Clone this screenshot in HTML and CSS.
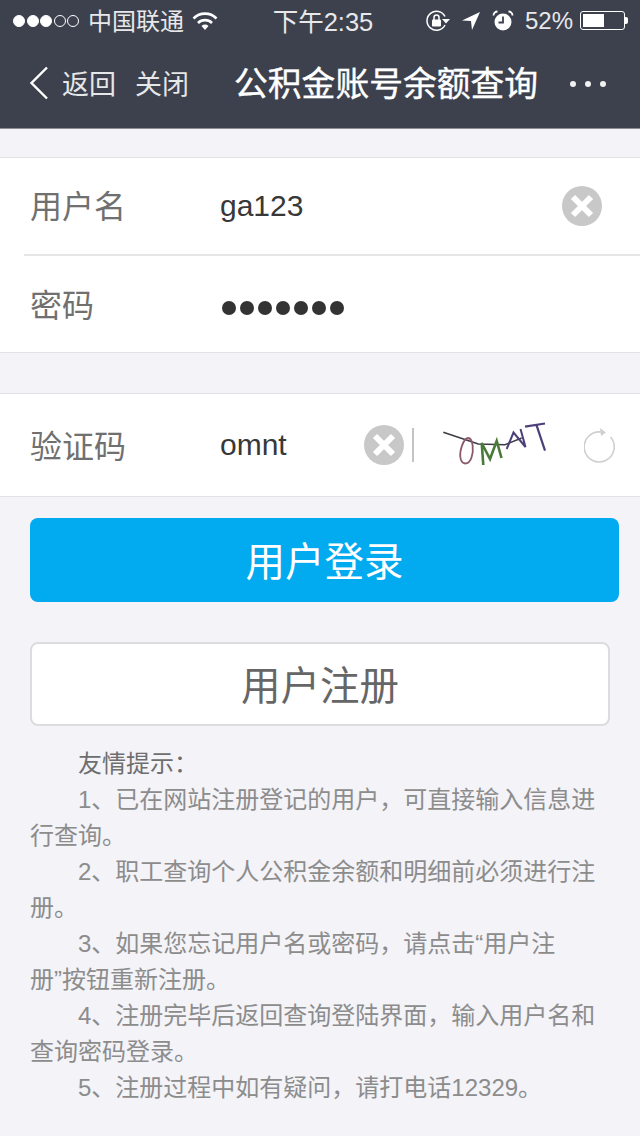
FILE: index.html
```html
<!DOCTYPE html>
<html lang="zh-CN">
<head>
    <meta charset="UTF-8">
    <meta name="viewport" content="width=device-width, initial-scale=1.0">
    <title>公积金账号余额查询</title>
    <link rel="stylesheet" href="styles.css">
</head>
<body>
    <header class="top">
        <div class="status">
            <div class="status-left">
                <span class="signal">
                    <i class="dot on"></i><i class="dot on"></i><i class="dot on"></i><i class="dot"></i><i class="dot"></i>
                </span>
                <span class="carrier">中国联通</span>
                <svg class="wifi" width="26" height="20" viewBox="0 0 26 20">
                    <path d="M1.5 7.5a16 16 0 0 1 23 0" fill="none" stroke="#fff" stroke-width="2.6"/>
                    <path d="M6 12a10 10 0 0 1 14 0" fill="none" stroke="#fff" stroke-width="2.6"/>
                    <path d="M9.5 15a5 5 0 0 1 7 0L13 19z" fill="#fff"/>
                </svg>
            </div>
            <span class="time">下午2:35</span>
            <div class="status-right">
                <svg width="26" height="22" viewBox="0 0 26 22">
                    <path d="M20 6.500A9.500 9.500 0 1 0 20 15" fill="none" stroke="#fff" stroke-width="1.500"/>
                    <path d="M17 9h8l-4 4.500z" fill="#fff"/>
                    <rect x="7" y="9.500" width="9" height="7" rx="1" fill="#fff"/>
                    <path d="M9 10V7.500a2.500 2.500 0 0 1 5 0V10" fill="none" stroke="#fff" stroke-width="1.500"/>
                </svg>
                <svg class="location" width="20" height="20" viewBox="0 0 20 20">
                    <path d="M19 1L1 9.500l9 .5 1 9z" fill="#fff"/>
                </svg>
                <svg width="22" height="22" viewBox="0 0 22 22">
                    <circle cx="11" cy="12" r="8.500" fill="#fff"/>
                    <path d="M11 6.500V12.500H6.500" fill="none" stroke="#3c414d" stroke-width="1.800"/>
                    <path d="M1.500 5.500a4 4 0 0 1 4-4M20.500 5.500a4 4 0 0 0-4-4" fill="none" stroke="#fff" stroke-width="1.800"/>
                </svg>
                <span class="percent">52%</span>
                <span class="battery"><span class="battery-fill"></span></span>
                <span class="battery-tip"></span>
            </div>
        </div>
        <nav class="nav">
            <svg class="back" width="20" height="34" viewBox="0 0 20 34">
                <path d="M18 1.500L2.500 17 18 32.500" fill="none" stroke="#fff" stroke-width="2.400"/>
            </svg>
            <span class="nav-link">返回</span>
            <span class="nav-link close">关闭</span>
            <h1 class="nav-title">公积金账号余额查询</h1>
            <span class="more"><i></i><i></i><i></i></span>
        </nav>
    </header>

    <section class="group first">
        <div class="row row-line">
            <label class="label">用户名</label>
            <span class="value">ga123</span>
            <span class="clear"><svg width="40" height="40" viewBox="0 0 40 40"><circle cx="20" cy="20" r="20" fill="#c8c8c8"/><path d="M11 11l18 18M29 11L11 29" stroke="#fff" stroke-width="6"/></svg></span>
        </div>
        <div class="row row-pass">
            <label class="label">密码</label>
            <span class="dots"><i></i><i></i><i></i><i></i><i></i><i></i><i></i></span>
        </div>
    </section>

    <section class="group second">
        <div class="row row-code">
            <label class="label">验证码</label>
            <span class="value code-value">omnt</span>
            <svg class="code-clear" width="40" height="40" viewBox="0 0 40 40"><circle cx="20" cy="20" r="20" fill="#c8c8c8"/><path d="M11 11l18 18M29 11L11 29" stroke="#fff" stroke-width="6"/></svg>
            <span class="divider"></span>
            <svg class="captcha" width="112" height="50" viewBox="0 0 112 50">
                <path d="M1.300 12.300L36.300 24 63 24.700 79.700 18" fill="none" stroke="#3f3a44" stroke-width="1.500"/>
                <path d="M26.500 18c-5.500 0-10 15-7.500 22 2 5 8 5 10.500-2.500 2.500-7.500 1.500-18.500-3-19.500z" fill="none" stroke="#8a5a6c" stroke-width="1.800"/>
                <path d="M41.300 45L39.700 23 48 39 54.700 21 59.500 38" fill="none" stroke="#4a7a3a" stroke-width="2.600"/>
                <path d="M64.700 29L71.500 12.500 83.500 27 78.500 9" fill="none" stroke="#4d3f78" stroke-width="2"/>
                <path d="M83 6.700L103 3.500M94.700 5.700L103 30.700" fill="none" stroke="#4d3f78" stroke-width="2.200"/>
            </svg>
            <svg class="refresh" width="34" height="38" viewBox="0 0 34 38">
                <path d="M17 6A15 15 0 1 0 26.500 11" fill="none" stroke="#cfcfcf" stroke-width="1.600"/>
                <path d="M16 2l6 4.500-5 3.500z" fill="#cfcfcf"/>
            </svg>
        </div>
    </section>

    <button class="btn btn-login">用户登录</button>
    <button class="btn btn-register">用户注册</button>

    <section class="tips">
        <p>友情提示：</p>
        <p>1、已在网站注册登记的用户，可直接输入信息进行查询。</p>
        <p>2、职工查询个人公积金余额和明细前必须进行注册。</p>
        <p>3、如果您忘记用户名或密码，请点击“用户注<br>册”按钮重新注册。</p>
        <p>4、注册完毕后返回查询登陆界面，输入用户名和查询密码登录。</p>
        <p>5、注册过程中如有疑问，请打电话12329。</p>
    </section>
</body>
</html>
```

FILE: styles.css
```css
* {
    box-sizing: border-box;
}
html, body {
    height: 1136px;
    overflow: hidden;
}
body {
    margin: 0;
    background-color: #f3f3f8;
    font-family: "Liberation Sans", "Noto Sans CJK SC", sans-serif;
    color: #333;
}
.top {
    height: 129px;
    background-color: #3c414d;
    border-bottom: 1px solid #8a8c92;
    color: #fff;
}
.status {
    height: 41px;
    padding: 0 12px 0 13px;
    display: flex;
    align-items: center;
    justify-content: space-between;
    font-size: 24px;
}
.status-left, .status-right {
    display: flex;
    align-items: center;
}
.status-left {
    width: 225px;
}
.status-right {
    width: 220px;
    justify-content: flex-end;
    gap: 9px;
}
.signal {
    display: flex;
    gap: 1.500px;
    margin-right: 9px;
}
.dot {
    width: 12px;
    height: 12px;
    border-radius: 50%;
    border: 1px solid #fff;
}
.dot.on {
    background-color: #fff;
}
.carrier {
    margin-right: 8px;
    padding-bottom: 3px;
    color: #e8e8ea;
}
.time {
    padding-bottom: 3px;
    font-size: 25.500px;
    color: #e8e8ea;
}
.location {
    margin: 0 2px 0 1px;
}
.percent {
    margin-left: 2px;
    font-size: 24px;
    color: #e8e8ea;
}
.battery {
    width: 45px;
    height: 19px;
    margin-left: -2px;
    padding: 2px;
    border: 1px solid #fff;
    border-radius: 3px;
}
.battery-fill {
    display: block;
    width: 21px;
    height: 100%;
    background-color: #fff;
}
.battery-tip {
    width: 3px;
    height: 7px;
    margin-left: -9px;
    background-color: #fff;
    border-radius: 0 2px 2px 0;
}
.nav {
    height: 87px;
    padding: 0 34px 4px 29px;
    display: flex;
    align-items: center;
}
.back {
    margin-right: 13px;
}
.nav-link {
    font-size: 27px;
    color: #e6e7e9;
}
.close {
    margin-left: 19px;
}
.nav-title {
    margin: 0 0 0 45px;
    padding-bottom: 2px;
    font-size: 33.800px;
    font-weight: normal;
    -webkit-text-stroke: 0.4px #fff;
    white-space: nowrap;
}
.more {
    margin-left: auto;
    margin-top: 2px;
    display: flex;
    gap: 9px;
}
.more i {
    width: 6px;
    height: 6px;
    border-radius: 50%;
    background-color: #f0f0f0;
}
.group {
    background-color: #fff;
    border-top: 1px solid #e2e2e4;
    border-bottom: 1px solid #e2e2e4;
}
.first {
    margin-top: 28px;
}
.second {
    margin-top: 40px;
}
.row {
    display: flex;
    align-items: center;
    padding-left: 30px;
}
.row-line {
    height: 98px;
    border-bottom: 2px solid #e6e6e8;
    margin-left: 24px;
    padding-left: 6px;
}
.row-line .label {
    padding-bottom: 5px;
}
.row-pass {
    height: 96px;
}
.row-code {
    height: 102px;
}
.label {
    width: 190px;
    padding-bottom: 3px;
    font-size: 32px;
    color: #707070;
}
.value {
    font-size: 30px;
    color: #383838;
}
.clear {
    margin-left: auto;
    margin-right: 38px;
    display: flex;
}
.dots {
    display: flex;
    gap: 4px;
    margin-left: 2px;
    padding-top: 7px;
}
.dots i {
    width: 14px;
    height: 14px;
    border-radius: 50%;
    background-color: #333;
}
.code-value {
    width: 144px;
}
.divider {
    width: 2px;
    height: 34px;
    margin-left: 8px;
    background-color: #c4c4c4;
}
.captcha {
    margin-left: 28px;
}
.refresh {
    margin-left: 30px;
}
.btn {
    display: block;
    padding: 0 0 3px;
    font-family: inherit;
    font-size: 39.500px;
    border-radius: 8px;
}
.btn-login {
    width: 589px;
    height: 84px;
    margin: 21px 0 0 30px;
    border: none;
    background-color: #02aaf0;
    color: #fff;
}
.btn-register {
    width: 580px;
    height: 84px;
    margin: 40px 0 0 30px;
    border: 2px solid #dcdcdc;
    background-color: #fff;
    color: #666;
}
.tips {
    margin: 20px 44px 0 30px;
    font-size: 24px;
    line-height: 36px;
    color: #8c8c8c;
}
.tips p {
    margin: 0;
    text-indent: 48px;
}
.tips p:first-child {
    color: #6e6e6e;
}
```
